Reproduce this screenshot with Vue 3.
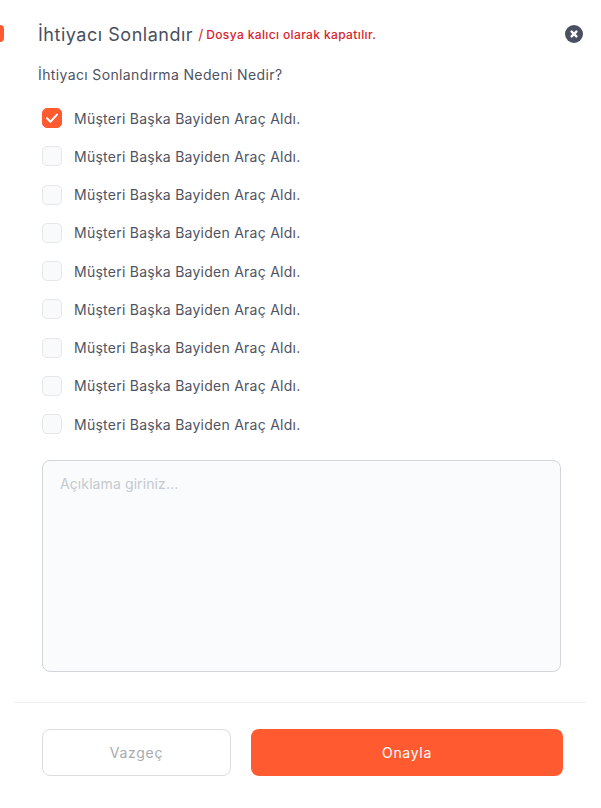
<script setup>
const rows = Array.from({ length: 9 }, (_, i) => ({ id: i, checked: i === 0 }))
</script>

<template>
  <div class="modal">
    <span class="tab"></span>
    <header class="head">
      <h2 class="title">İhtiyacı Sonlandır</h2>
      <span class="slash">/</span>
      <span class="note">Dosya kalıcı olarak kapatılır.</span>
      <svg class="close" width="18" height="18" viewBox="0 0 18 18">
        <circle cx="9" cy="9" r="9" fill="#4a4f62" />
        <path d="M6.6 6.6l4.8 4.8M11.4 6.6l-4.8 4.8" stroke="#fff" stroke-width="2.4" stroke-linecap="round" />
      </svg>
    </header>
    <p class="question">İhtiyacı Sonlandırma Nedeni Nedir?</p>
    <ul class="list">
      <li v-for="r in rows" :key="r.id" class="row">
        <span class="box" :class="{ on: r.checked }">
          <svg v-if="r.checked" width="14" height="12" viewBox="0 0 14 12">
            <path d="M2 6.3l3.4 3.4L12 2.6" fill="none" stroke="#fff" stroke-width="2" stroke-linecap="round" stroke-linejoin="round" />
          </svg>
        </span>
        <span class="label">Müşteri Başka Bayiden Araç Aldı.</span>
      </li>
    </ul>
    <div class="area">Açıklama giriniz...</div>
    <div class="rule"></div>
    <footer class="foot">
      <button class="btn ghost">Vazgeç</button>
      <button class="btn primary">Onayla</button>
    </footer>
  </div>
</template>

<style>
html, body { background: #fff; }
</style>

<style scoped>
.modal {
  position: relative;
  width: 601px;
  height: 808px;
  box-sizing: border-box;
  padding-top: 24px;
  font-family: Inter, "Liberation Sans", sans-serif;
  color: #4f5362;
  background: #fff;
  overflow: hidden;
}
.tab {
  position: absolute;
  left: -6px;
  top: 25px;
  width: 10px;
  height: 17px;
  border-radius: 4px;
  background: #ff5a30;
}
.head {
  display: flex;
  align-items: center;
  height: 20px;
  padding: 0 18px 0 38px;
}
.title {
  margin: 0;
  font-size: 18px;
  font-weight: 400;
  color: #4a4f5e;
  letter-spacing: 0.52px;
}
.slash {
  margin-left: 5px;
  font-size: 14px;
  color: #d8232f;
}
.note {
  margin-left: 3px;
  font-size: 12px;
  font-weight: 500;
  letter-spacing: 0.37px;
  color: #d8232f;
}
.close { margin-left: auto; }
.question {
  margin: 21px 0 0 38px;
  font-size: 14px;
  line-height: 20px;
  letter-spacing: 0.37px;
  color: #4f5362;
}
.list {
  list-style: none;
  margin: 23px 0 0;
  padding: 0 0 0 42px;
  display: flex;
  flex-direction: column;
  gap: 18.25px;
}
.row {
  display: flex;
  align-items: center;
  height: 20px;
  gap: 12px;
}
.box {
  width: 20px;
  height: 20px;
  box-sizing: border-box;
  border-radius: 5px;
  border: 1px solid #e6e7eb;
  background: #f8fafb;
  display: flex;
  align-items: center;
  justify-content: center;
}
.box.on {
  border-color: #ff5a30;
  background: #ff5a30;
}
.label {
  font-size: 14px;
  letter-spacing: 0.25px;
  color: #4f5362;
}
.area {
  margin: 26px 40px 0 42px;
  height: 212px;
  box-sizing: border-box;
  padding: 14px 17px;
  border: 1px solid #d3d5da;
  border-radius: 8px;
  background: #f9fbfc;
  font-size: 14px;
  line-height: 18px;
  letter-spacing: 0.1px;
  color: #c6c9ce;
}
.rule {
  margin: 30px 15px 0 14px;
  height: 1px;
  background: #eceef0;
}
.foot {
  display: flex;
  gap: 20px;
  margin: 26px 38px 0 42px;
}
.btn {
  height: 47px;
  box-sizing: border-box;
  border-radius: 8px;
  font-family: inherit;
  font-size: 14px;
  font-weight: 400;
  letter-spacing: 0.7px;
}
.ghost {
  width: 189px;
  border: 1px solid #dcdde1;
  background: #fff;
  color: #a9abb2;
}
.primary {
  flex: 1;
  border: 0;
  background: #ff5a30;
  color: #fff;
}
</style>
